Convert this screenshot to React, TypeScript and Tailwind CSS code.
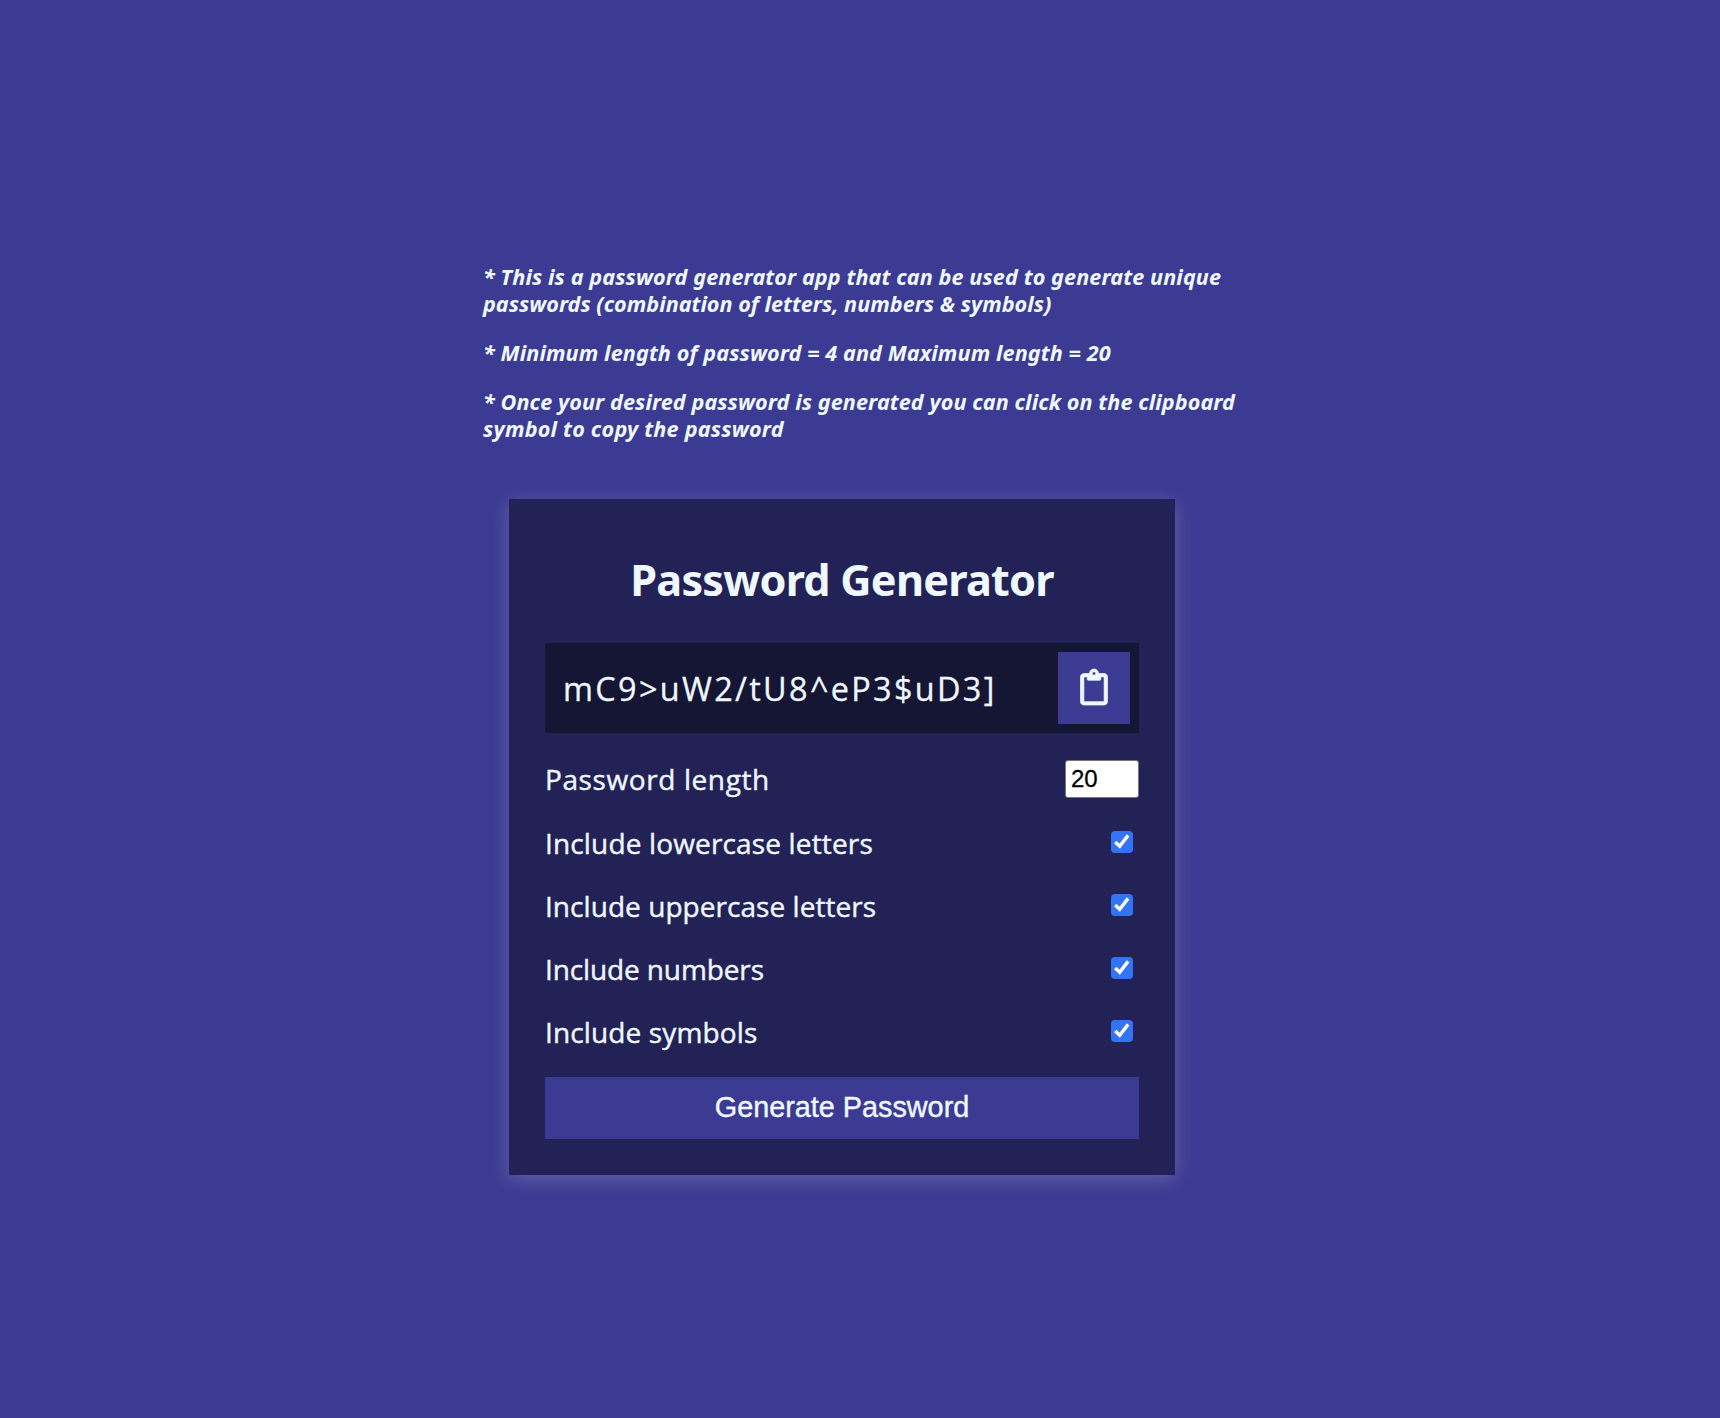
import React from 'react';
import { FaRegClipboard } from 'react-icons/fa';

const settings = [
  { label: 'Include lowercase letters', tracking: 'tracking-[0.15px]' },
  { label: 'Include uppercase letters', tracking: 'tracking-[0.05px]' },
  { label: 'Include numbers', tracking: 'tracking-[-0.12px]' },
  { label: 'Include symbols', tracking: 'tracking-[0.13px]' },
];

function Checkbox() {
  return (
    <span
      role="checkbox"
      aria-checked="true"
      className="mr-[6px] mb-px flex size-[22px] items-center justify-center rounded-[4px] bg-[#3374f6]"
    >
      <svg viewBox="0 0 22 22" className="size-[22px]" fill="none" stroke="#fff" strokeWidth="3.4">
        <path d="M4.2 11 L8.7 15.3 L17.1 4.4" />
      </svg>
    </span>
  );
}

function Notes() {
  return (
    <section className="ml-[483px] flex w-[770px] flex-col gap-[22px] font-['Noto_Sans',sans-serif] text-[21.6px] leading-[27px] font-bold whitespace-nowrap italic">
      <p>
        <span className="block tracking-[0.11px]">
          * This is a password generator app that can be used to generate unique
        </span>
        <span className="block tracking-[0.015px]">
          passwords (combination of letters, numbers &amp; symbols)
        </span>
      </p>
      <p className="tracking-[0.1px]">* Minimum length of password = 4 and Maximum length = 20</p>
      <p>
        <span className="block tracking-[0.09px]">
          * Once your desired password is generated you can click on the clipboard
        </span>
        <span className="block tracking-[0.22px]">symbol to copy the password</span>
      </p>
    </section>
  );
}

export default function App() {
  return (
    <main className="flex h-[1418px] w-[1720px] flex-col overflow-hidden bg-[#3c3b93] pt-[263px] font-['Open_Sans',sans-serif] text-[#f0f8ff]">
      <Notes />
      <section className="mt-[57px] ml-[509px] flex h-[676px] w-[666px] flex-col bg-[#232257] px-9 pt-[54px] shadow-[0_3.6px_18px_rgba(255,255,255,0.2)]">
        <h2 className="text-center font-['Noto_Sans',sans-serif] text-[43.2px] leading-[54px] font-bold tracking-[-0.76px]">
          Password Generator
        </h2>
        <div className="mt-[36px] flex h-[90px] items-center justify-between bg-[#151534] pr-[9px] pl-[18px]">
          <span className="text-[32.4px] leading-10 tracking-[2.33px] [-webkit-text-stroke:0.3px_#f0f8ff]">{'mC9>uW2/tU8^eP3$uD3]'}</span>
          <button className="flex size-[72px] items-center justify-center bg-[#3c3b93] pb-[3px]">
            <FaRegClipboard size={36} className="overflow-visible" stroke="currentColor" strokeWidth={10} />
          </button>
        </div>
        <div className="mt-[27px] flex h-[38px] items-center justify-between">
          <label className="text-[28px] leading-9 tracking-[0.6px] [-webkit-text-stroke:0.4px_#f0f8ff]">Password length</label>
          <input
            type="text"
            defaultValue="20"
            className="h-[38px] w-[74px] rounded-[3px] border border-[#767676] bg-white pb-px pl-[5px] font-['Liberation_Sans',sans-serif] text-[24px] text-black [-webkit-text-stroke:0.3px_#000]"
          />
        </div>
        <div className="mt-[13px]">
          {settings.map((s) => (
            <div key={s.label} className="flex h-[63px] items-center justify-between">
              <label className={`text-[28px] leading-9 [-webkit-text-stroke:0.4px_#f0f8ff] ${s.tracking}`}>{s.label}</label>
              <Checkbox />
            </div>
          ))}
        </div>
        <button className="mt-[14px] h-[62px] shrink-0 bg-[#3c3b93] font-['Liberation_Sans',sans-serif] text-[28.8px] [-webkit-text-stroke:0.4px_#f0f8ff]">
          Generate Password
        </button>
      </section>
    </main>
  );
}
